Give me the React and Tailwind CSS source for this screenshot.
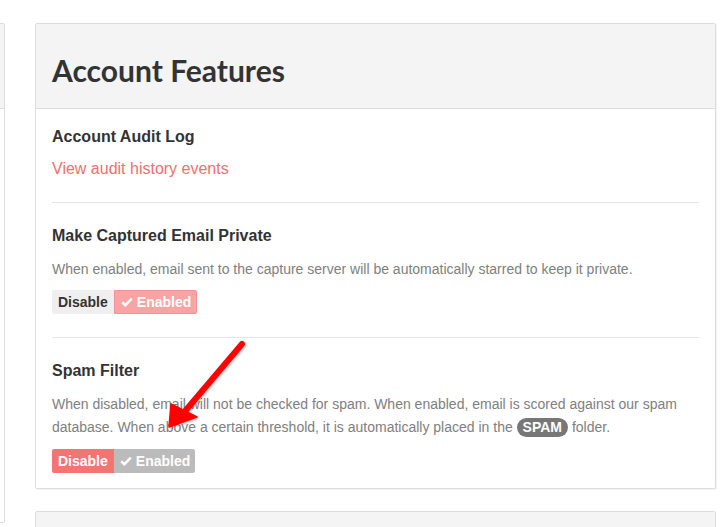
const Toggle = ({ enabled }) => {
  return (
    <div className="flex h-6 text-[14px] font-bold leading-6">
      <span
        className={
          enabled
            ? "px-[6px] bg-[#efefef] text-[#333] rounded-l-[2px]"
            : "px-[6px] bg-[#f47474] text-white rounded-l-[2px]"
        }
      >
        Disable
      </span>
      <span
        className={
          enabled
            ? "flex items-center gap-[4px] pl-[6px] pr-[5px] bg-[#f8a4a4] border border-[#f39494] text-white rounded-r-[2px]"
            : "flex items-center gap-[4px] pl-[6px] pr-[5px] bg-[#bbbbbb] text-white rounded-r-[2px]"
        }
      >
        <svg width="12" height="10" viewBox="0 0 12 10" fill="none">
          <path d="M1.2 5.2 L4.3 8.2 L10.8 1.6" stroke="white" strokeWidth="2.6" />
        </svg>
        Enabled
      </span>
    </div>
  );
};

const Arrow = () => (
  <svg
    className="absolute left-[150px] top-[330px] pointer-events-none"
    width="110"
    height="110"
    viewBox="150 330 110 110"
  >
    <defs>
      <filter id="sh" x="-20%" y="-20%" width="140%" height="140%">
        <feDropShadow dx="1" dy="1" stdDeviation="1.2" floodColor="#000" floodOpacity="0.25" />
      </filter>
    </defs>
    <g filter="url(#sh)" fill="#ff0000" stroke="#ff0000">
      <line x1="242" y1="344" x2="186" y2="410" strokeWidth="6" strokeLinecap="round" />
      <polygon points="169,427 171,404 197,417" strokeWidth="1.5" strokeLinejoin="round" />
    </g>
  </svg>
);

export default function App() {
  return (
    <div
      className="relative w-[726px] h-[527px] overflow-hidden bg-white text-[#333]"
      style={{ fontFamily: '"Liberation Sans", Arial, sans-serif' }}
    >
      <div className="flex gap-[30px] pt-[23px]">
        <div className="w-[5px] h-[500px] shrink-0 border-t border-r border-b border-[#ddd] rounded-r-[2px]">
          <div className="h-[85px] bg-[#f4f4f4] border-b border-[#ddd]" />
        </div>

        <div className="w-[681px] shrink-0 flex flex-col gap-[22px]">
          <div className="border border-[#ddd] rounded-[2px] bg-white shadow-[1px_1px_1px_rgba(0,0,0,0.05)]">
            <div className="h-[85px] bg-[#f4f4f4] border-b border-[#ddd] px-4 flex items-center">
              <h1 className="text-[30px] font-bold text-[#333] pt-[8px]" style={{ fontFamily: "Lato, sans-serif" }}>
                Account Features
              </h1>
            </div>
            <div className="px-4">
              <div className="pt-[18px] pb-[23px] border-b border-[#e6e6e6]">
                <h2 className="text-[16px] font-bold leading-5">Account Audit Log</h2>
                <a className="block mt-[12px] text-[16px] leading-5 text-[#f26f6f]">View audit history events</a>
              </div>
              <div className="pt-[23px] pb-[23px] border-b border-[#e6e6e6]">
                <h2 className="text-[16px] font-bold leading-5">Make Captured Email Private</h2>
                <p className="mt-3 text-[14px] leading-[23px] text-[#808080]">
                  When enabled, email sent to the capture server will be automatically starred to keep it private.
                </p>
                <div className="mt-[9px]">
                  <Toggle enabled />
                </div>
              </div>
              <div className="pt-[23px] pb-[15px]">
                <h2 className="text-[16px] font-bold leading-5">Spam Filter</h2>
                <p className="mt-3 text-[14px] leading-[23px] text-[#808080]">
                  When disabled, email will not be checked for spam. When enabled, email is scored against our spam
                  database. When above a certain threshold, it is automatically placed in the{" "}
                  <span className="inline-block px-[6px] rounded-full bg-[#777] text-white font-bold text-[14px] leading-[19px]">
                    SPAM
                  </span>{" "}
                  folder.
                </p>
                <div className="mt-[10px]">
                  <Toggle enabled={false} />
                </div>
              </div>
            </div>
          </div>

          <div className="h-[60px] border border-[#ddd] rounded-[2px] bg-[#f4f4f4]" />
        </div>
      </div>
      <Arrow />
    </div>
  );
}
